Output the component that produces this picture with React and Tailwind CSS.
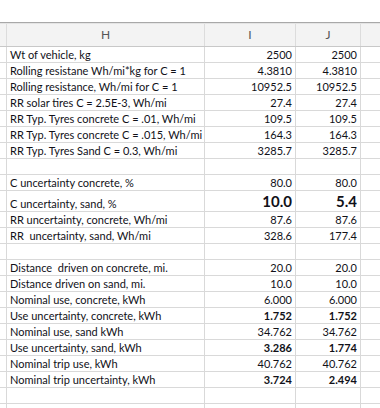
const rows = [
  ["Wt of vehicle, kg", "2500", "2500"],
  ["Rolling resistane Wh/mi*kg for C = 1", "4.3810", "4.3810"],
  ["Rolling resistance, Wh/mi for C = 1", "10952.5", "10952.5"],
  ["RR solar tires C = 2.5E-3, Wh/mi", "27.4", "27.4"],
  ["RR Typ. Tyres concrete C = .01, Wh/mi", "109.5", "109.5"],
  ["RR Typ. Tyres concrete C = .015, Wh/mi", "164.3", "164.3"],
  ["RR Typ. Tyres Sand C = 0.3, Wh/mi", "3285.7", "3285.7"],
  ["", "", ""],
  ["C uncertainty concrete, %", "80.0", "80.0"],
  ["C uncertainty, sand, %", "10.0", "5.4", "big"],
  ["RR uncertainty, concrete, Wh/mi", "87.6", "87.6"],
  ["RR  uncertainty, sand, Wh/mi", "328.6", "177.4"],
  ["", "", ""],
  ["Distance  driven on concrete, mi.", "20.0", "20.0"],
  ["Distance driven on sand, mi.", "10.0", "10.0"],
  ["Nominal use, concrete, kWh", "6.000", "6.000"],
  ["Use uncertainty, concrete, kWh", "1.752", "1.752", "bold"],
  ["Nominal use, sand kWh", "34.762", "34.762"],
  ["Use uncertainty, sand, kWh", "3.286", "1.774", "bold"],
  ["Nominal trip use, kWh", "40.762", "40.762"],
  ["Nominal trip uncertainty, kWh", "3.724", "2.494", "bold"],
  ["", "", ""],
  ["", "", ""],
];

function Row({ label, i, j, kind }) {
  const h = kind === "big" ? "h-[21px]" : "h-[16px]";
  const val =
    kind === "big"
      ? "font-bold text-[15px]"
      : kind === "bold"
      ? "font-bold"
      : "";
  return (
    <div className={`flex ${h} border-b border-[#d9d9d9]`}>
      <div className="w-[7px] shrink-0 border-r border-[#d9d9d9]" />
      <div className="w-[198px] shrink-0 border-r border-[#d9d9d9] pl-[3px] flex items-end pb-[2px] overflow-hidden whitespace-pre">
        {label}
      </div>
      <div className={`w-[91px] shrink-0 border-r border-[#d9d9d9] pr-[3px] flex items-end justify-end pb-[2px] ${val}`}>
        {i}
      </div>
      <div className={`w-[65px] shrink-0 border-r border-[#d9d9d9] pr-[3px] flex items-end justify-end pb-[2px] ${val}`}>
        {j}
      </div>
      <div className="flex-1" />
    </div>
  );
}

export default function App() {
  return (
    <div className="w-[380px] h-[408px] overflow-hidden bg-white text-[11px] leading-none text-[#111118] font-['Lato','Liberation_Sans',sans-serif]">
      <div className="h-[23px] border-b border-[#a8a8a8]" />
      <div className="flex h-[24px] border-b border-[#c8c8c8] bg-[#f3f3f3] text-[#555] text-[12px] border-t border-t-[#e4e4e4]">
        <div className="w-[7px] shrink-0 border-r border-[#dcdcdc]" />
        <div className="w-[198px] shrink-0 border-r border-[#dcdcdc] flex items-center justify-center">H</div>
        <div className="w-[91px] shrink-0 border-r border-[#dcdcdc] flex items-center justify-center">I</div>
        <div className="w-[65px] shrink-0 border-r border-[#dcdcdc] flex items-center justify-center">J</div>
        <div className="flex-1" />
      </div>
      {rows.map((r, k) => (
        <Row key={k} label={r[0]} i={r[1]} j={r[2]} kind={r[3]} />
      ))}
    </div>
  );
}
